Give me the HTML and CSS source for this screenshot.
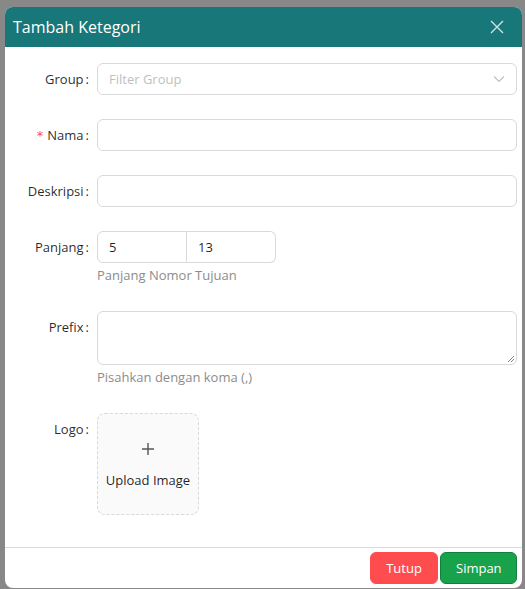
FILE: index.html
```html
<!DOCTYPE html>
<html>
<head>
<meta charset="utf-8">
<link rel="stylesheet" href="styles.css">
</head>
<body>
<div class="modal">
  <div class="modal-header">
    <span class="modal-title">Tambah Ketegori</span>
    <svg class="close" width="14" height="14" viewBox="0 0 14 14"><path d="M1 1L13 13M13 1L1 13" stroke="#cfe3e3" stroke-width="1.4" fill="none"/></svg>
  </div>
  <div class="modal-body">
    <div class="row">
      <label class="label">Group<span class="colon">:</span></label>
      <div class="control">
        <div class="input select"><span class="placeholder">Filter Group</span>
          <svg width="12" height="8" viewBox="0 0 12 8"><path d="M1 1.5L6 6.5L11 1.5" stroke="#bfbfbf" stroke-width="1.1" fill="none"/></svg>
        </div>
      </div>
    </div>
    <div class="row">
      <label class="label"><span class="req">*</span>Nama<span class="colon">:</span></label>
      <div class="control"><div class="input"></div></div>
    </div>
    <div class="row">
      <label class="label">Deskripsi<span class="colon">:</span></label>
      <div class="control"><div class="input"></div></div>
    </div>
    <div class="row">
      <label class="label">Panjang<span class="colon">:</span></label>
      <div class="control">
        <div class="group">
          <div class="input g1">5</div>
          <div class="input g2">13</div>
        </div>
        <div class="help">Panjang Nomor Tujuan</div>
      </div>
    </div>
    <div class="row">
      <label class="label">Prefix<span class="colon">:</span></label>
      <div class="control">
        <div class="input textarea">
          <svg class="resize" width="8" height="8" viewBox="0 0 8 8"><path d="M7 1L1 7M7 4L4 7" stroke="#888" stroke-width="1" fill="none"/></svg>
        </div>
        <div class="help">Pisahkan dengan koma (,)</div>
      </div>
    </div>
    <div class="row last">
      <label class="label">Logo<span class="colon">:</span></label>
      <div class="control">
        <div class="upload">
          <svg width="14" height="14" viewBox="0 0 14 14"><path d="M7 1V13M1 7H13" stroke="#555" stroke-width="1.4" fill="none"/></svg>
          <span class="upload-text">Upload Image</span>
        </div>
      </div>
    </div>
  </div>
  <div class="modal-footer">
    <button class="btn btn-red">Tutup</button>
    <button class="btn btn-green">Simpan</button>
  </div>
</div>
</body>
</html>
```
FILE: styles.css
```css
html, body {
  margin: 0;
  padding: 0;
  height: 100%;
  background: #888888;
  font-family: "Open Sans", "Noto Sans", sans-serif;
  overflow: hidden;
}
body {
  padding: 7px 3px 0 5px;
  box-sizing: border-box;
}
.modal {
  background: #fff;
  border-radius: 8px;
  overflow: hidden;
  height: 581px;
  display: flex;
  flex-direction: column;
}
.modal-header {
  background: #177779;
  height: 40px;
  display: flex;
  align-items: center;
  justify-content: space-between;
  padding: 0 18px 0 8px;
}
.modal-title {
  color: #fff;
  font-size: 16px;
}
.modal-body {
  padding: 16px 5px 8px 16px;
  flex: 1;
}
.row {
  display: flex;
  margin-bottom: 24px;
}
.row.last { margin-bottom: 0; }
.label {
  width: 76px;
  flex: none;
  text-align: right;
  font-size: 13px;
  color: rgba(0,0,0,0.85);
  height: 32px;
  line-height: 32px;
  white-space: nowrap;
}
.colon { margin: 0 8px 0 2px; }
.req {
  color: #ff4d4f;
  margin-right: 4px;
  font-family: "DejaVu Sans", sans-serif;
  font-size: 13px;
}
.control { flex: 1; }
.input {
  height: 32px;
  box-sizing: border-box;
  border: 1px solid #d9d9d9;
  border-radius: 6px;
  padding: 0 11px;
  font-size: 13px;
  line-height: 30px;
  color: rgba(0,0,0,0.88);
}
.select {
  display: flex;
  align-items: center;
  justify-content: space-between;
}
.placeholder { color: #bfbfbf; }
.group { display: flex; width: 179px; }
.g1 { width: 90px; border-radius: 6px 0 0 6px; }
.g2 { width: 89px; border-left: none; border-radius: 0 6px 6px 0; }
.help {
  font-size: 13px;
  color: #8c8c8c;
  line-height: 24px;
}
.textarea {
  height: 54px;
  position: relative;
}
.resize {
  position: absolute;
  right: 1px;
  bottom: 1px;
}
.upload {
  width: 102px;
  height: 102px;
  box-sizing: border-box;
  border: 1px dashed #d9d9d9;
  border-radius: 8px;
  background: #fafafa;
  display: flex;
  flex-direction: column;
  align-items: center;
  justify-content: center;
  gap: 15px;
  padding-top: 3px;
}
.upload-text {
  font-size: 13px;
  color: rgba(0,0,0,0.88);
}
.modal-footer {
  border-top: 1px solid #d9d9d9;
  display: flex;
  justify-content: flex-end;
  gap: 2px;
  padding: 4px 5px 4px 0;
}
.btn {
  height: 32px;
  border-radius: 6px;
  font-family: "Open Sans", sans-serif;
  font-size: 13px;
  color: #fff;
  padding: 0 15px;
  cursor: pointer;
}
.btn-red {
  background: #ff4d4f;
  border: 1px solid #ff4d4f;
  width: 68px;
}
.btn-green {
  background: #18a24b;
  border: 1px solid #12803a;
  width: 77px;
}
```
